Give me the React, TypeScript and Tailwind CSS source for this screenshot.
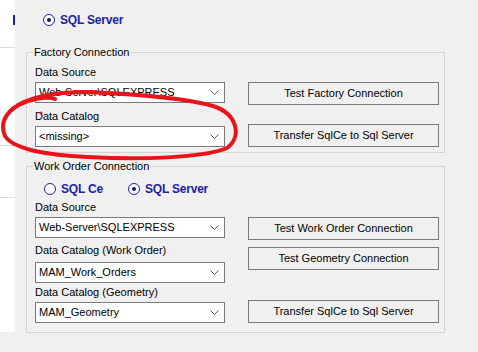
import React from 'react';

function Combo({ value }: { value: string }) {
  return (
    <div className="flex h-[21px] w-[190px] items-center justify-between border border-[#7a7a7a] bg-white pl-[3px] pr-[5px]">
      <span className="leading-none">{value}</span>
      <svg width="9" height="5" viewBox="0 0 9 5">
        <path d="M0.5 0.5 L4.5 4.5 L8.5 0.5" fill="none" stroke="#606060" strokeWidth="1" />
      </svg>
    </div>
  );
}

function Btn({ label, className = '' }: { label: string; className?: string }) {
  return (
    <button className={`flex h-[23px] w-[191px] items-center justify-center border border-[#7a7a7a] bg-[#f0f0f0] leading-none ${className}`}>
      {label}
    </button>
  );
}

function Radio({ checked, label, className = '' }: { checked?: boolean; label: string; className?: string }) {
  return (
    <div className={`flex items-center ${className}`}>
      <span className="flex h-[12px] w-[12px] items-center justify-center rounded-full border border-[#1f1fa8] bg-white">
        {checked && <span className="h-[4px] w-[4px] rounded-full bg-[#14145a]" />}
      </span>
      <span className="ml-[5px] text-[12px] font-bold leading-none tracking-[-0.2px] text-[#1d1da8]">{label}</span>
    </div>
  );
}

function Label({ text, className = '' }: { text: string; className?: string }) {
  return <div className={`h-[14px] leading-[14px] ${className}`}>{text}</div>;
}

export default function App() {
  return (
    <div className="relative flex h-[352px] w-[478px] overflow-hidden bg-[#f0f0f0] font-['Liberation_Sans',Arial,sans-serif] text-[11px] text-black">
      {/* left panel edge */}
      <div className="relative h-[332px] w-[15px] bg-white">
        <div className="absolute right-0 top-[15px] h-[10px] w-[2px] bg-[#1d1da8]" />
        <div className="absolute left-0 top-[47px] h-px w-[15px] bg-[#dadada]" />
        <div className="absolute left-0 top-[145px] h-px w-[15px] bg-[#dadada]" />
        <div className="absolute left-0 top-[197px] h-px w-[15px] bg-[#dadada]" />
      </div>

      <div className="flex w-[430px] flex-col pl-[11px]">
        <div className="h-[45px] pl-[17px] pt-[14px]">
          <Radio checked label="SQL Server" />
        </div>

        <fieldset className="w-[419px] border border-[#d5d5d5]">
          <legend className="ml-[6px] px-[1px] leading-[14px]">Factory Connection</legend>
          <div className="flex pb-[5px] pl-[8px]">
            <div className="flex flex-col">
              <Label text="Data Source" className="mt-[6px]" />
              <div className="mt-[3px]">
                <Combo value="Web-Server\SQLEXPRESS" />
              </div>
              <Label text="Data Catalog" className="mt-[6px]" />
              <div className="mt-[3px]">
                <Combo value="<missing>" />
              </div>
            </div>
            <div className="ml-[23px] flex flex-col">
              <Btn label="Test Factory Connection" className="mt-[23px]" />
              <Btn label="Transfer SqlCe to Sql Server" className="mt-[19px]" />
            </div>
          </div>
        </fieldset>

        <fieldset className="mt-[6px] w-[419px] border border-[#d5d5d5]">
          <legend className="ml-[6px] px-[1px] leading-[14px]">Work Order Connection</legend>
          <div className="flex pb-[9px] pl-[8px]">
            <div className="flex flex-col">
              <div className="mt-[9px] flex h-[14px] items-center">
                <Radio label="SQL Ce" className="ml-[9px]" />
                <Radio checked label="SQL Server" className="ml-[25px]" />
              </div>
              <Label text="Data Source" className="mt-[4px]" />
              <div className="mt-[3px]">
                <Combo value="Web-Server\SQLEXPRESS" />
              </div>
              <Label text="Data Catalog (Work Order)" className="mt-[5px]" />
              <div className="mt-[5px]">
                <Combo value="MAM_Work_Orders" />
              </div>
              <Label text="Data Catalog (Geometry)" className="mt-[2px]" />
              <div className="mt-[3px]">
                <Combo value="MAM_Geometry" />
              </div>
            </div>
            <div className="ml-[23px] flex flex-col">
              <Btn label="Test Work Order Connection" className="mt-[44px]" />
              <Btn label="Test Geometry Connection" className="mt-[7px]" />
              <Btn label="Transfer SqlCe to Sql Server" className="mt-[30px]" />
            </div>
          </div>
        </fieldset>
      </div>

      {/* hand-drawn red annotation */}
      <svg className="pointer-events-none absolute left-0 top-0" width="478" height="352" viewBox="0 0 478 352">
        <path
          d="M 18 105 C 32 97, 55 92, 88 92 C 130 94, 182 97, 213 106 C 238 114, 242 137, 227 148 C 203 158, 140 160, 88 157 C 48 155, 14 150, 5 136 C -1 122, 7 108, 28 101 C 41 97, 51 97, 55 99"
          fill="none"
          stroke="#e8141c"
          strokeWidth="4"
          strokeLinecap="round"
          strokeLinejoin="round"
        />
        <circle cx="41" cy="113" r="1.5" fill="#e8141c" />
      </svg>
    </div>
  );
}
